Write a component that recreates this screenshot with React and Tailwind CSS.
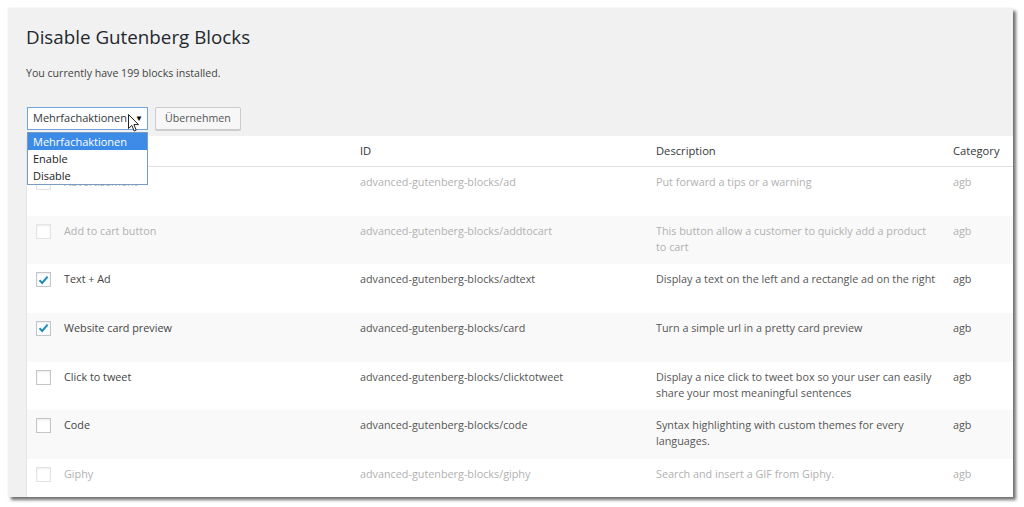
import React from "react";

const rows = [
  { name: "Advertisement", id: "advanced-gutenberg-blocks/ad", desc: ["Put forward a tips or a warning"], disabled: true, checked: false },
  { name: "Add to cart button", id: "advanced-gutenberg-blocks/addtocart", desc: ["This button allow a customer to quickly add a product", "to cart"], disabled: true, checked: false },
  { name: "Text + Ad", id: "advanced-gutenberg-blocks/adtext", desc: ["Display a text on the left and a rectangle ad on the right"], disabled: false, checked: true },
  { name: "Website card preview", id: "advanced-gutenberg-blocks/card", desc: ["Turn a simple url in a pretty card preview"], disabled: false, checked: true },
  { name: "Click to tweet", id: "advanced-gutenberg-blocks/clicktotweet", desc: ["Display a nice click to tweet box so your user can easily", "share your most meaningful sentences"], disabled: false, checked: false },
  { name: "Code", id: "advanced-gutenberg-blocks/code", desc: ["Syntax highlighting with custom themes for every", "languages."], disabled: false, checked: false },
  { name: "Giphy", id: "advanced-gutenberg-blocks/giphy", desc: ["Search and insert a GIF from Giphy."], disabled: true, checked: false },
];

function Checkbox({ checked, disabled }) {
  return (
    <div className={"w-[15px] h-[15px] shrink-0 bg-white border flex items-center justify-center shadow-[inset_0_1px_2px_rgba(0,0,0,0.08)] " + (disabled ? "border-[#e2e4e6]" : "border-[#c3c6c9]")}>
      {checked && (
        <svg width="11" height="10" viewBox="0 0 11 10">
          <path d="M1.5 5.2 L4.2 8 L9.6 1.6" fill="none" stroke="#1e8cbe" strokeWidth="2" />
        </svg>
      )}
    </div>
  );
}

function Cursor() {
  return (
    <svg width="12" height="18" viewBox="0 0 12 18" className="absolute left-[100px] top-[6px]">
      <path d="M0.5 0.5 L0.5 14.5 L3.8 11.4 L6.2 17 L8.2 16.1 L5.9 10.6 L10.5 10.6 Z" fill="#fff" stroke="#222" strokeWidth="1" strokeLinejoin="round" />
    </svg>
  );
}

export default function App() {
  return (
    <div className="w-[1024px] h-[507px] bg-white pt-[8px] pl-[8px] overflow-hidden" style={{ fontFamily: '"Open Sans", "Noto Sans", sans-serif' }}>
      <div className="relative w-[1005px] h-[489px] bg-[#f1f1f1] overflow-hidden shadow-[3px_3px_3px_rgba(0,0,0,0.55),0_0_1px_rgba(0,0,0,0.15)]">
        <div className="pl-[18px] pt-[15px]">
          <h1 className="text-[18.8px] leading-[28px] text-[#23282d] font-normal">Disable Gutenberg Blocks</h1>
          <p className="mt-[15px] text-[10.6px] leading-[14px] text-[#444]">You currently have 199 blocks installed.</p>
          <div className="mt-[27px] ml-[1px] flex gap-[7px] h-[23px]">
            <div className="relative w-[121px] h-[23px] bg-white border border-[#6ea5dc] flex items-center pl-[5px] text-[11px] text-[#32373c]">
              <span>Mehrfachaktionen</span>
              <span className="absolute right-[4px] top-[4px] text-[8px] text-black">▼</span>
              <Cursor />
              <div className="absolute left-[-1px] top-[24px] w-[121px] bg-white border border-[#7a9cc2] z-10 text-[11px] leading-[17px] text-[#222]">
                <div className="bg-[#3c8be6] text-white pl-[5px] h-[17px]">Mehrfachaktionen</div>
                <div className="pl-[5px] h-[17px]">Enable</div>
                <div className="pl-[5px] h-[17px]">Disable</div>
              </div>
            </div>
            <div className="h-[23px] px-[9px] bg-[#f7f7f7] border border-[#cccccc] rounded-[2px] shadow-[0_1px_0_#ccc] flex items-center text-[10.6px] text-[#555]">Übernehmen</div>
          </div>
          <div className="mt-[6px] bg-white border-l border-[#e5e5e5]">
            <div className="flex h-[31px] pt-[1px] items-center border-b border-[#e1e1e1] text-[11.2px] text-[#32373c]">
              <div className="w-[333px]"></div>
              <div className="w-[296px]">ID</div>
              <div className="w-[297px]">Description</div>
              <div>Category</div>
            </div>
            {rows.map((r, i) => {
              const c = r.disabled ? "text-[#b1b1b1]" : "text-[#555]";
              return (
                <div key={i} className={"flex h-[48.67px] pt-[7px] text-[10.8px] leading-[16px] " + (i % 2 === 1 ? "bg-[#f9f9f9] " : "bg-white ") + c}>
                  <div className="w-[333px] flex items-start pl-[9px] gap-[13px]">
                    <div className="mt-[1px]"><Checkbox checked={r.checked} disabled={r.disabled} /></div>
                    <span className={r.disabled ? "" : "text-[#444]"}>{r.name}</span>
                  </div>
                  <div className="w-[296px] whitespace-nowrap">{r.id}</div>
                  <div className="w-[297px] whitespace-nowrap">
                    {r.desc.map((d, j) => (
                      <div key={j}>{d}</div>
                    ))}
                  </div>
                  <div>agb</div>
                </div>
              );
            })}
          </div>
        </div>
      </div>
    </div>
  );
}
